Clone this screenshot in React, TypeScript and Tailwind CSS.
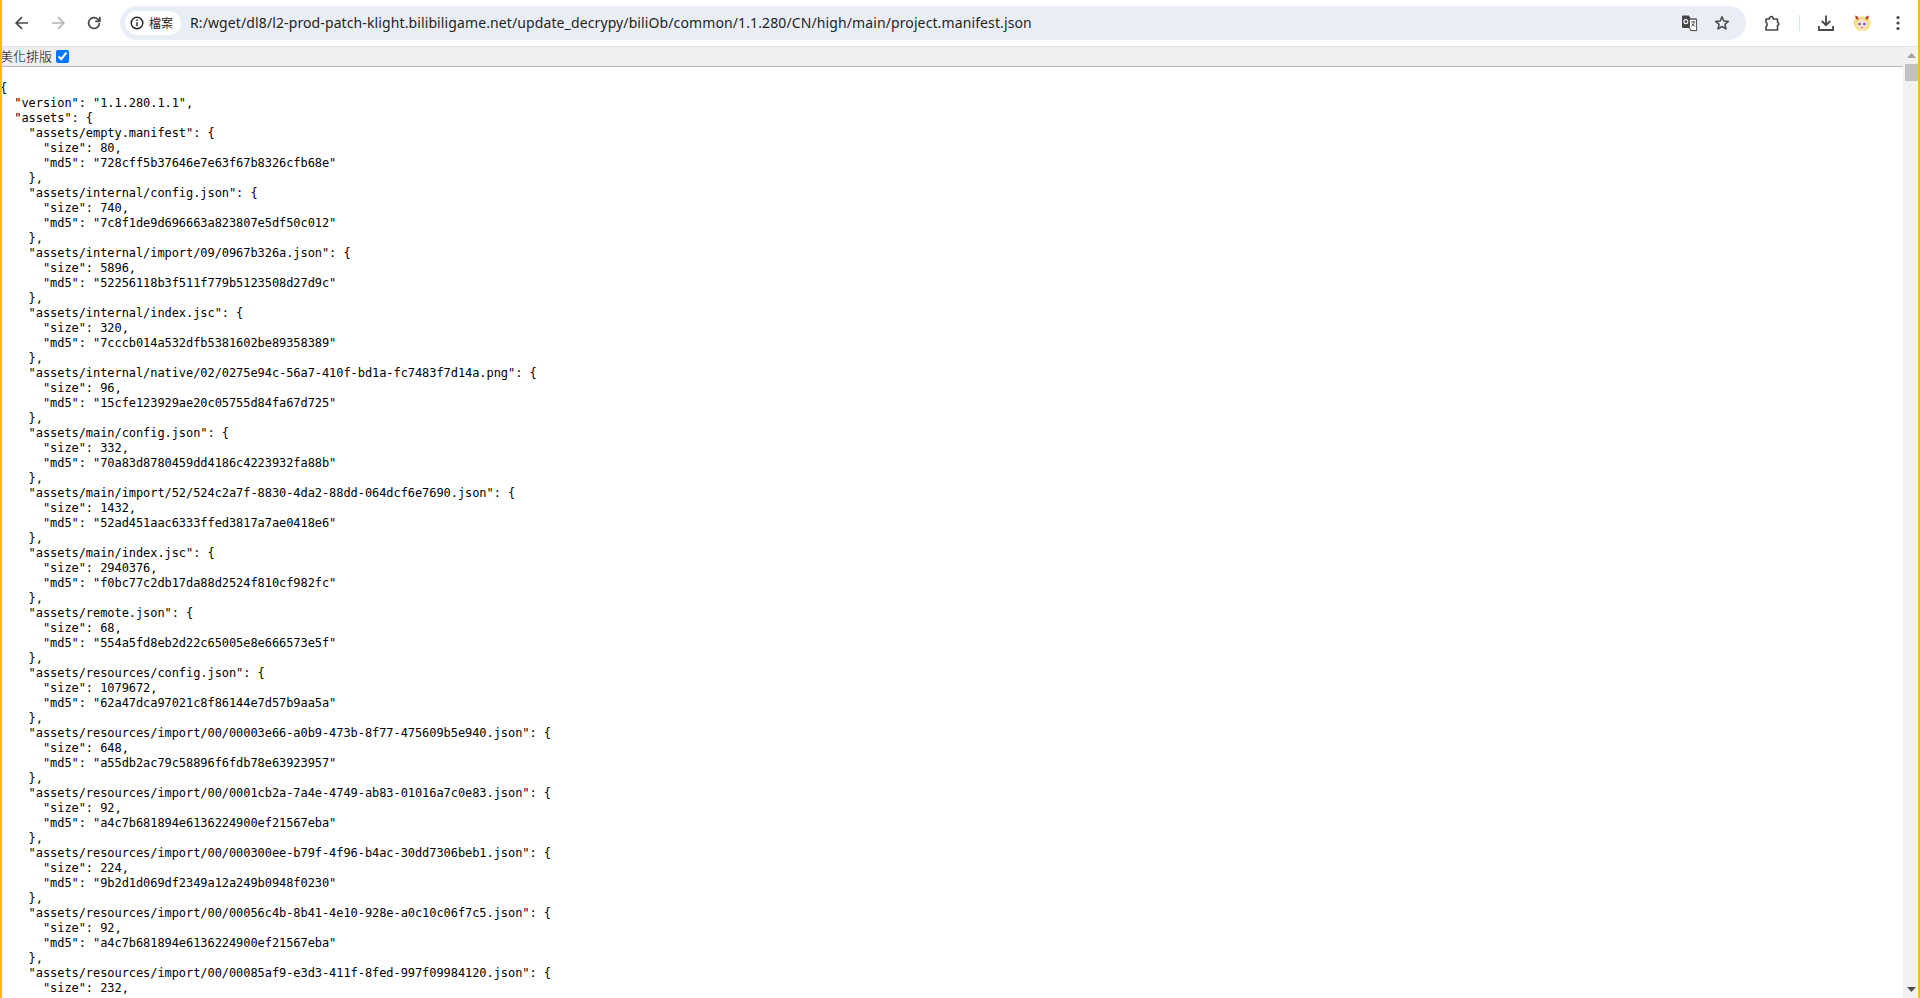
// Chrome 視窗 + JSON 檢視頁
const PREFIX = 'assets/resources/import/00/';

const ENTRIES: [string, number, string?][] = [
  ['assets/empty.manifest', 80, '728cff5b37646e7e63f67b8326cfb68e'],
  ['assets/internal/config.json', 740, '7c8f1de9d696663a823807e5df50c012'],
  ['assets/internal/import/09/0967b326a.json', 5896, '52256118b3f511f779b5123508d27d9c'],
  ['assets/internal/index.jsc', 320, '7cccb014a532dfb5381602be89358389'],
  ['assets/internal/native/02/0275e94c-56a7-410f-bd1a-fc7483f7d14a.png', 96, '15cfe123929ae20c05755d84fa67d725'],
  ['assets/main/config.json', 332, '70a83d8780459dd4186c4223932fa88b'],
  ['assets/main/import/52/524c2a7f-8830-4da2-88dd-064dcf6e7690.json', 1432, '52ad451aac6333ffed3817a7ae0418e6'],
  ['assets/main/index.jsc', 2940376, 'f0bc77c2db17da88d2524f810cf982fc'],
  ['assets/remote.json', 68, '554a5fd8eb2d22c65005e8e666573e5f'],
  ['assets/resources/config.json', 1079672, '62a47dca97021c8f86144e7d57b9aa5a'],
  [PREFIX + '00003e66-a0b9-473b-8f77-475609b5e940.json', 648, 'a55db2ac79c58896f6fdb78e63923957'],
  [PREFIX + '0001cb2a-7a4e-4749-ab83-01016a7c0e83.json', 92, 'a4c7b681894e6136224900ef21567eba'],
  [PREFIX + '000300ee-b79f-4f96-b4ac-30dd7306beb1.json', 224, '9b2d1d069df2349a12a249b0948f0230'],
  [PREFIX + '00056c4b-8b41-4e10-928e-a0c10c06f7c5.json', 92, 'a4c7b681894e6136224900ef21567eba'],
  [PREFIX + '00085af9-e3d3-411f-8fed-997f09984120.json', 232],
];

function buildJson() {
  const lines = ['{', '  "version": "1.1.280.1.1",', '  "assets": {'];
  for (const [name, size, md5] of ENTRIES) {
    lines.push(`    "${name}": {`, `      "size": ${size},`);
    if (md5) lines.push(`      "md5": "${md5}"`, '    },');
  }
  return lines.join('\n');
}

function ToolButton({ children }: { children: React.ReactNode }) {
  return <div className="flex h-[36px] w-[36px] flex-none items-center justify-center">{children}</div>;
}

function PillButton({ children }: { children: React.ReactNode }) {
  return <div className="flex h-[28px] w-[32px] flex-none items-center justify-center">{children}</div>;
}

function Toolbar() {
  return (
    <div className="flex h-[47px] flex-none items-center border-b border-[#e3e3e3] bg-white pl-[4px]">
      <ToolButton>
        <svg width="16" height="16" viewBox="0 0 16 16" fill="none" stroke="#474747" strokeWidth="1.7">
          <path d="M14 8H2.5M8 2.2 2.2 8 8 13.8" />
        </svg>
      </ToolButton>
      <ToolButton>
        <svg width="16" height="16" viewBox="0 0 16 16" fill="none" stroke="#b4b4b4" strokeWidth="1.7">
          <path d="M2 8h11.5M8 2.2 13.8 8 8 13.8" />
        </svg>
      </ToolButton>
      <ToolButton>
        <svg width="16" height="16" viewBox="0 0 16 16" fill="none" stroke="#474747" strokeWidth="1.7">
          <path d="M13.4 8a5.4 5.4 0 1 1-1.6-3.8L13.6 6" />
          <path d="M13.8 1.8v4.6H9.2" />
        </svg>
      </ToolButton>

      <div className="ml-[8px] flex h-[34px] w-[1626px] flex-none items-center rounded-full bg-[#e9eef6] pl-[5px] pr-[8px]">
        <div className="flex h-[24px] w-[56px] flex-none items-center gap-[5px] rounded-full bg-white pl-[5px]">
          <svg width="14" height="14" viewBox="0 0 14 14" fill="none" stroke="#1f1f1f" strokeWidth="1.4">
            <circle cx="7" cy="7" r="5.8" />
            <path d="M7 6.2v4M7 3.6v1.5" />
          </svg>
          <span className="text-[12px] text-[#1f1f1f] [font-family:'Noto_Sans_CJK_TC',sans-serif]">檔案</span>
        </div>
        <span className="ml-[9px] flex-1 pb-[2px] text-[14px] tracking-[0.11px] text-[#1f1f1f] [font-family:'Noto_Sans',sans-serif]">
          R:/wget/dl8/l2-prod-patch-klight.bilibiligame.net/update_decrypy/biliOb/common/1.1.280/CN/high/main/project.manifest.json
        </span>
        <PillButton>
          <svg width="18" height="18" viewBox="0 0 18 18">
            <path d="M2 1.5h6l1.5 3H15a1 1 0 0 1 1 1v10.5a1 1 0 0 1-1 1H9.5L8.8 14H2a1 1 0 0 1-1-1V2.5a1 1 0 0 1 1-1Z" fill="#474747" />
            <path d="M8.5 5.2H15.6V16.6H10L8.5 14Z" fill="#fff" stroke="#474747" strokeWidth="0.9" />
            <circle cx="4.8" cy="7.6" r="2" fill="none" stroke="#fff" strokeWidth="1.1" />
            <path d="M10.2 8h4M12.2 7v1M13.4 8c-.4 2-1.6 3.6-3 4.4M11 9.6c.5 1.2 1.4 2.2 2.6 2.8" fill="none" stroke="#474747" strokeWidth="0.9" />
          </svg>
        </PillButton>
        <PillButton>
          <svg width="16" height="16" viewBox="0 0 16 16" fill="none" stroke="#474747" strokeWidth="1.5" strokeLinejoin="round">
            <path d="M8 1.8 9.8 6l4.6.4-3.5 3 1.1 4.5L8 11.5l-4 2.4 1.1-4.5-3.5-3L6.2 6Z" />
          </svg>
        </PillButton>
      </div>

      <div className="ml-[9px]">
        <ToolButton>
          <svg width="18" height="18" viewBox="0 0 18 18" fill="none" stroke="#474747" strokeWidth="1.6" strokeLinejoin="round">
            <path d="M2 5h3.4a2 2 0 0 1 3.6-1.6L9.3 5h4.2v3.2a1.8 1.8 0 0 1 0 3.4V16H2v-3.4a2.4 2.4 0 0 0 0-4.2Z" />
          </svg>
        </ToolButton>
      </div>
      <div className="ml-[8px] h-[16px] w-[1px] flex-none bg-[#d3e3fd]" />
      <div className="ml-[8px]">
        <ToolButton>
          <svg width="18" height="18" viewBox="0 0 18 18" fill="none" stroke="#474747" strokeWidth="1.8">
            <path d="M9 1.5V11M4.8 7 9 11.2 13.2 7M2 12v4h14v-4" />
          </svg>
        </ToolButton>
      </div>
      <ToolButton>
        <svg width="20" height="20" viewBox="0 0 20 20">
          <path d="M1 9 4 4l3 1 3-3 3 3 3-1 3 5-1.5 5-2.5 3.5h-9L2.500 14Z" fill="#f7e08a" />
          <circle cx="10" cy="11" r="5.200" fill="#fbe0d6" />
          <path d="M4.500 9c2-1.200 3-2.500 3.500-4l2 1.500 2-1.500c.5 1.500 1.500 2.800 3.500 4L14 5.500H6Z" fill="#eec14a" />
          <path d="M4 6 3 2.500 6.500 4 6 6.500ZM16 6l1-3.500L13.500 4 14 6.500Z" fill="#b8352c" />
          <circle cx="7.600" cy="11" r="1.300" fill="#6a4fb0" />
          <circle cx="12.400" cy="11" r="1.300" fill="#6a4fb0" />
          <path d="M9 14.500h2" stroke="#df5b66" strokeWidth="1" />
        </svg>
      </ToolButton>
      <ToolButton>
        <svg width="4" height="16" viewBox="0 0 4 16" fill="#474747">
          <circle cx="2" cy="2.500" r="1.600" />
          <circle cx="2" cy="8" r="1.600" />
          <circle cx="2" cy="13.500" r="1.600" />
        </svg>
      </ToolButton>
    </div>
  );
}

function Scrollbar() {
  return (
    <div className="flex w-[17px] flex-none flex-col items-center bg-[#f1f1f1]">
      <div className="flex h-[17px] w-full flex-none items-center justify-center">
        <svg width="9" height="5" viewBox="0 0 9 5" fill="#a3a3a3"><path d="M4.500 0 9 5H0Z" /></svg>
      </div>
      <div className="h-[17px] w-[13px] flex-none bg-[#c1c1c1]" />
      <div className="flex-1" />
      <div className="flex h-[17px] w-full flex-none items-center justify-center">
        <svg width="9" height="5" viewBox="0 0 9 5" fill="#505050"><path d="M0 0h9L4.500 5Z" /></svg>
      </div>
    </div>
  );
}

export default function App() {
  return (
    <div className="relative flex h-[998px] w-[1920px] flex-col overflow-hidden bg-white">
      <Toolbar />
      <div className="flex min-h-0 flex-1">
        <div className="flex min-w-0 flex-1 flex-col overflow-hidden">
          <div className="flex h-[20px] flex-none items-center border-b border-[#b9b9b9] bg-[#efefef] text-[13px] font-light text-black [font-family:'Noto_Sans_CJK_TC',sans-serif]">
            <label className="pb-[2px]">美化排版</label>
            <input type="checkbox" defaultChecked className="ml-[4px] mr-[3px]" />
          </div>
          <pre className="mt-[14px] text-[12px] leading-[15px] tracking-[-0.07px] text-black [font-family:'DejaVu_Sans_Mono',monospace]">
            {buildJson()}
          </pre>
        </div>
        <Scrollbar />
      </div>
      {/* 螢幕截圖外框的黃線 */}
      <div className="pointer-events-none absolute inset-y-0 left-0 w-[2px] bg-[#ffbf00]" />
      <div className="pointer-events-none absolute inset-y-0 right-0 w-[2px] bg-[#ffbf00]" />
    </div>
  );
}
